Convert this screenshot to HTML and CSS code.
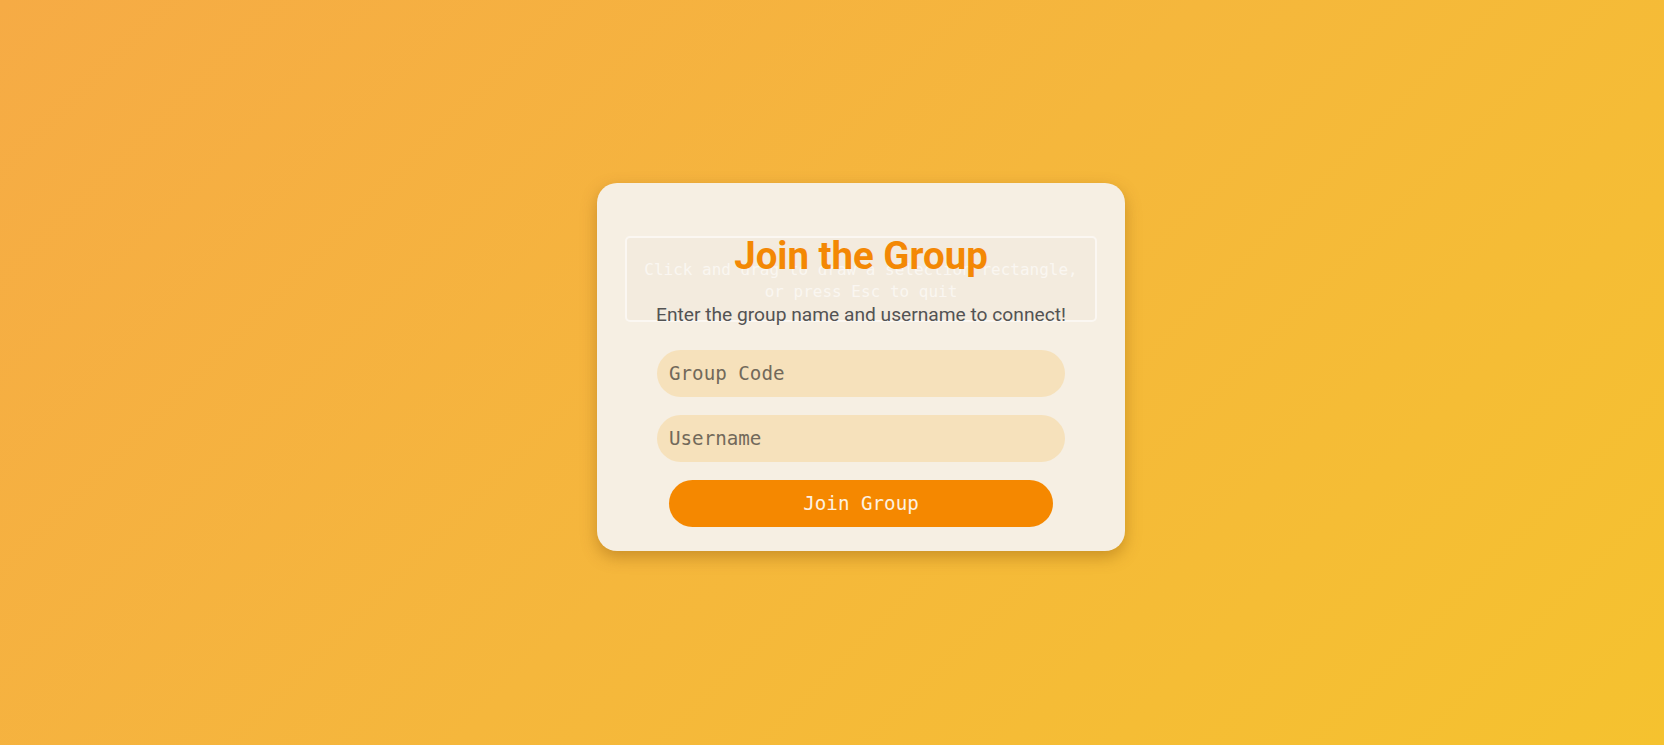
FILE: index.html
```html
<!DOCTYPE html>
<html lang="en">
<head>
<meta charset="utf-8">
<title>Join the Group</title>
<link rel="stylesheet" href="styles.css">
</head>
<body>
<main class="page">
  <section class="card">
    <div class="hint">Click and drag to draw a selection rectangle,<br>or press Esc to quit</div>
    <h1 class="title">Join the Group</h1>
    <p class="subtitle">Enter the group name and username to connect!</p>
    <form class="form">
      <input class="field" type="text" placeholder="Group Code">
      <input class="field" type="text" placeholder="Username">
      <button class="join" type="button">Join Group</button>
    </form>
  </section>
</main>
</body>
</html>
```

FILE: styles.css
```css
html, body {
  margin: 0;
  padding: 0;
  height: 100%;
}
body {
  background: linear-gradient(135deg, #f6ab45 0%, #f5b73c 50%, #f5c22f 100%);
  font-family: Roboto, "Liberation Sans", sans-serif;
}
.page {
  box-sizing: border-box;
  height: 745px;
  display: flex;
  align-items: center;
  justify-content: center;
  padding: 0 0 11px 58px;
}
.card {
  position: relative;
  box-sizing: border-box;
  width: 528px;
  padding: 50px 0 24px;
  background: #f6efe3;
  border-radius: 20px;
  box-shadow: 0 6px 16px rgba(120, 70, 0, 0.35);
  display: flex;
  flex-direction: column;
  align-items: center;
}
.hint {
  position: absolute;
  left: 28px;
  top: 53px;
  box-sizing: border-box;
  width: 472px;
  height: 86px;
  border: 2px solid rgba(255, 255, 255, 0.6);
  border-radius: 5px;
  background: rgba(120, 90, 40, 0.025);
  color: rgba(255, 255, 255, 0.6);
  font-family: "DejaVu Sans Mono", monospace;
  font-size: 16px;
  line-height: 22px;
  text-align: center;
  padding-top: 21px;
}
.title {
  position: relative;
  margin: 0;
  font-size: 38.4px;
  line-height: 45px;
  font-weight: 700;
  color: #f38804;
}
.subtitle {
  position: relative;
  margin: 26px 0 0;
  font-size: 19.2px;
  line-height: 22px;
  color: #535353;
}
.form {
  margin-top: 24px;
  display: flex;
  flex-direction: column;
  align-items: center;
  gap: 18px;
}
.field {
  box-sizing: border-box;
  width: 408px;
  height: 47px;
  padding: 0 12px;
  border: none;
  border-radius: 24px;
  background: #f6e1bb;
  font-family: "DejaVu Sans Mono", monospace;
  font-size: 19.2px;
  color: #333;
  outline: none;
}
.field::placeholder {
  color: #72695a;
}
.join {
  box-sizing: border-box;
  width: 384px;
  height: 47px;
  border: none;
  border-radius: 24px;
  background: #f58800;
  color: #fdf1e1;
  font-family: "DejaVu Sans Mono", monospace;
  font-size: 19.2px;
  cursor: pointer;
}
```
